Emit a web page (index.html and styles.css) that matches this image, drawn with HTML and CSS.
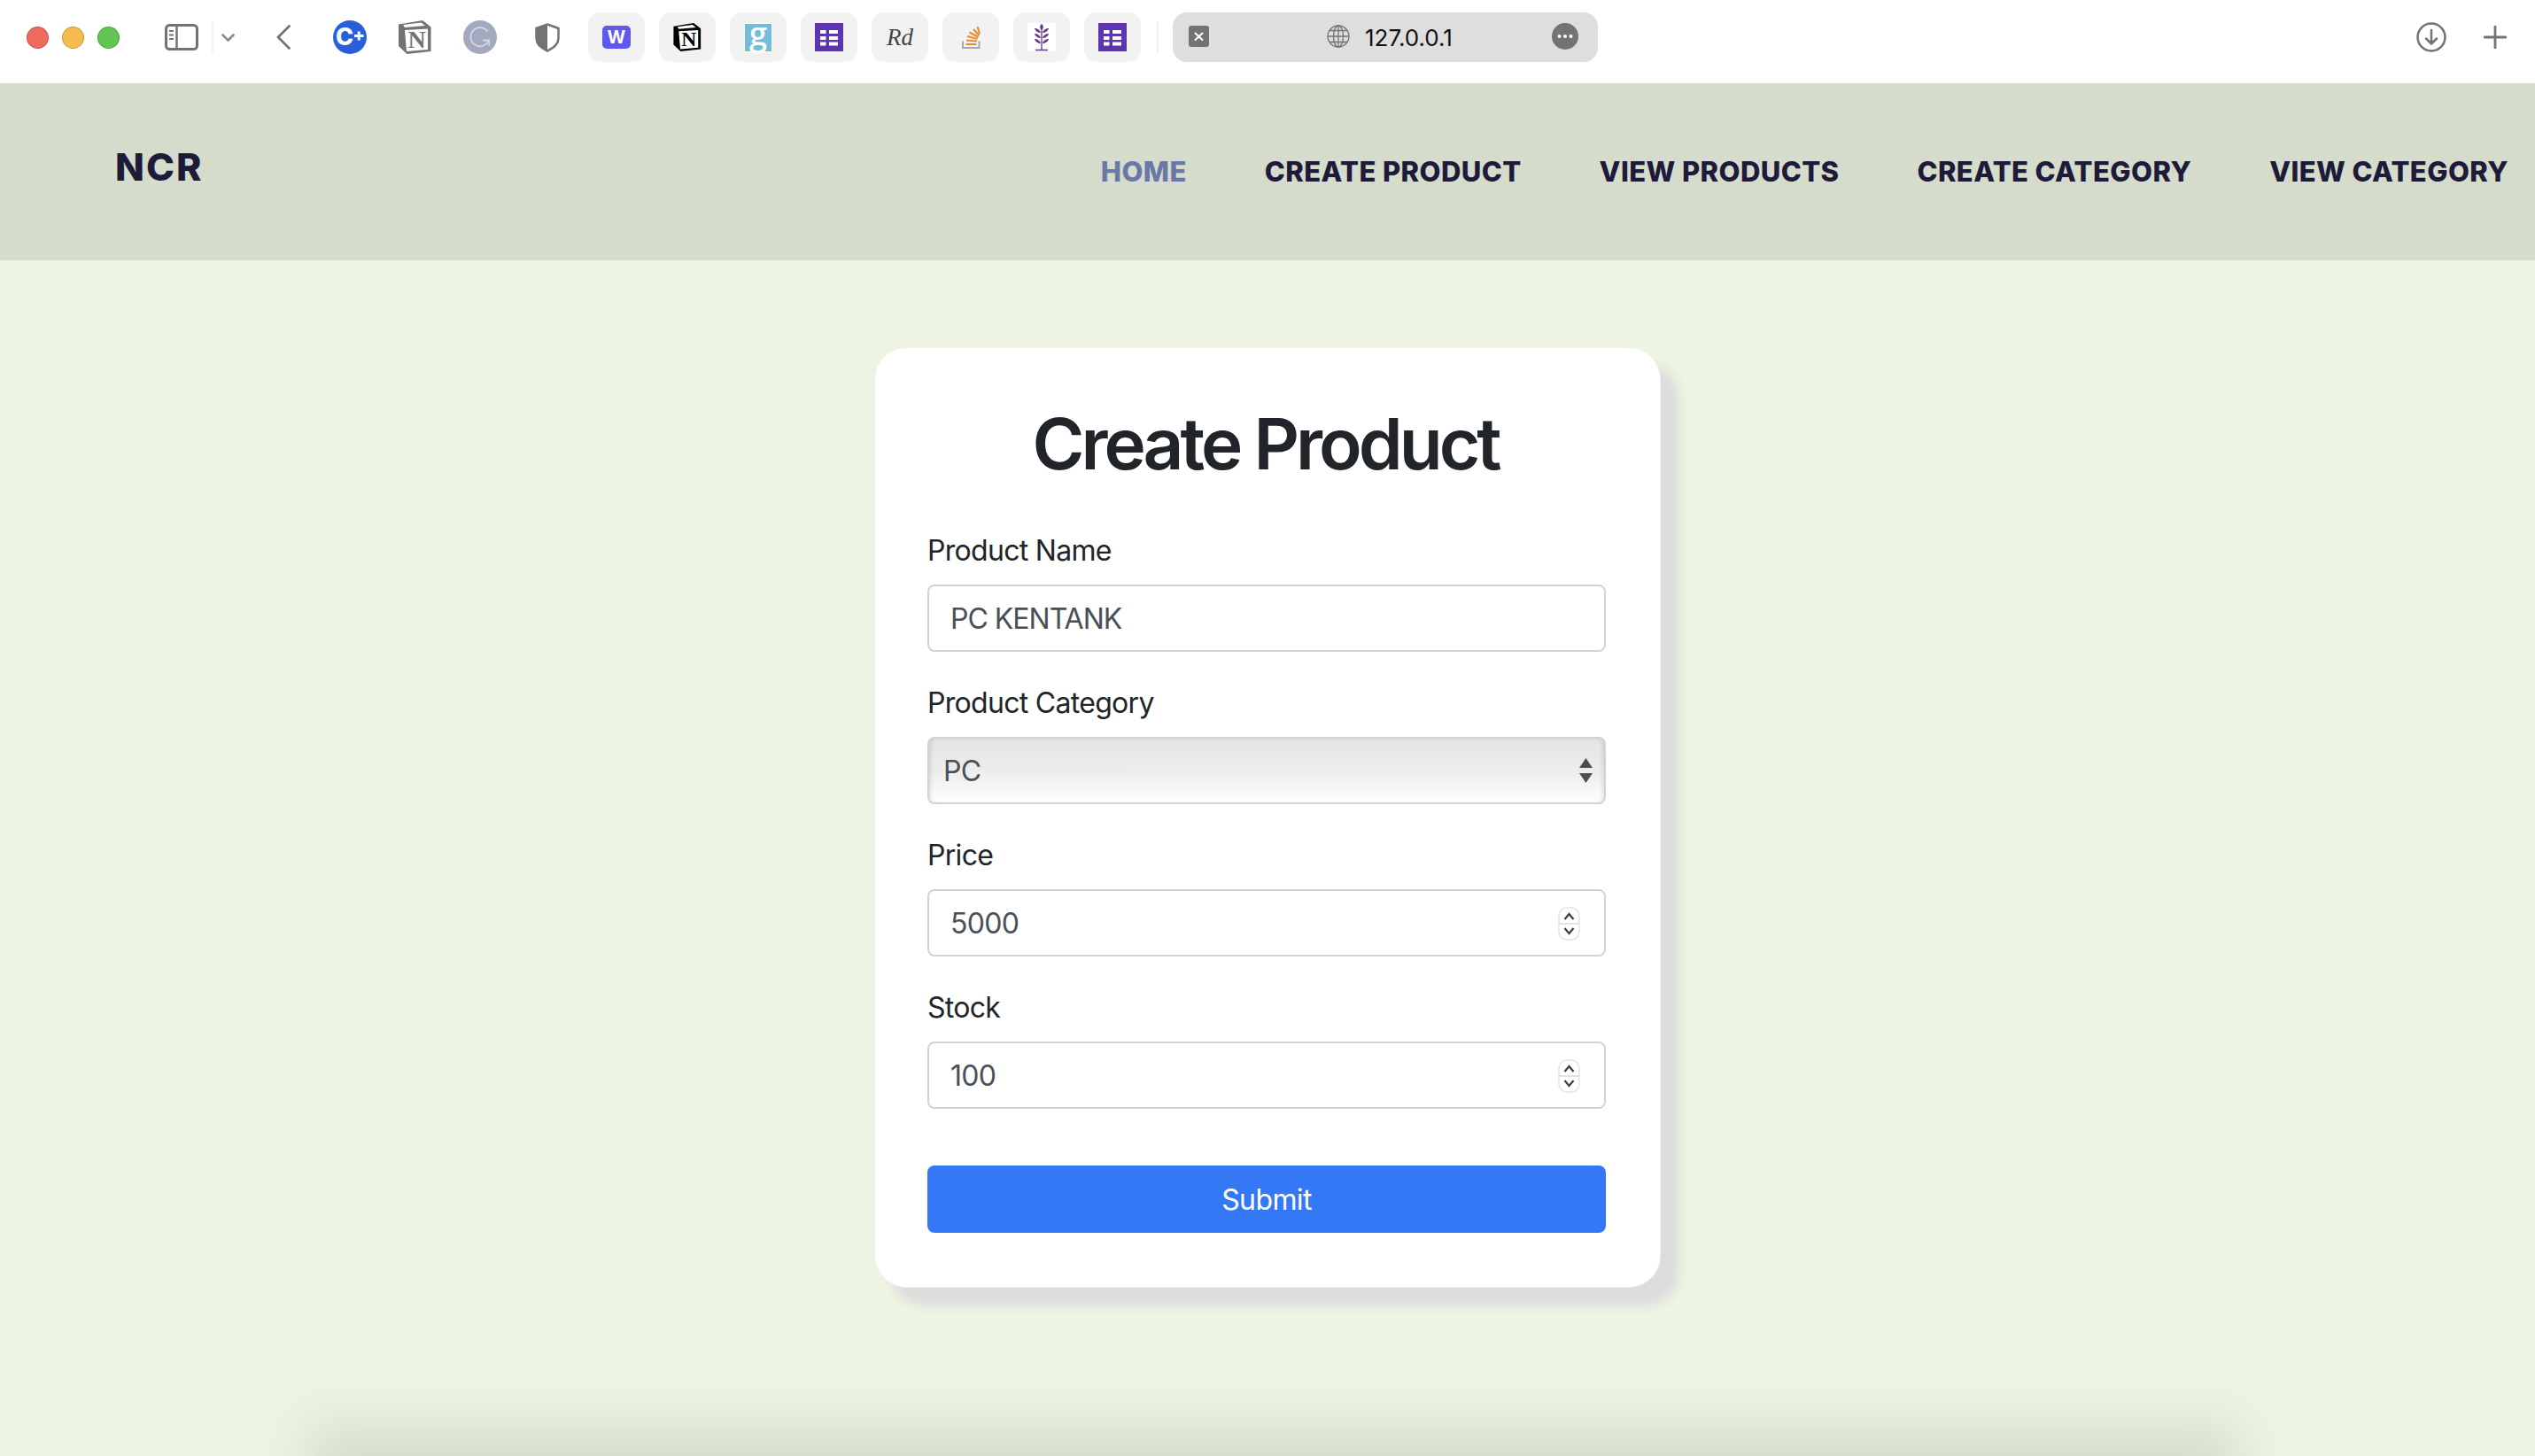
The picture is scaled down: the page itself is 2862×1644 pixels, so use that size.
FILE: index.html
```html
<html>
<head>
    <title>Create Product</title>
    <link rel="stylesheet" href="styles.css">
</head>
<body>
    <div class="toolbar">
        <div class="lights">
            <span class="light red"></span>
            <span class="light yellow"></span>
            <span class="light green"></span>
        </div>
        <svg class="sidebarIcon" width="38" height="30" viewBox="0 0 38 30">
            <rect x="1.5" y="1.5" width="35" height="27" rx="4" fill="none" stroke="#737373" stroke-width="3"/>
            <path d="M13.5 2v26" stroke="#737373" stroke-width="2.5"/>
            <path d="M5 8h5M5 12.5h5M5 17h5" stroke="#737373" stroke-width="2"/>
        </svg>
        <span class="toolDivider firstDivider"></span>
        <svg class="chevronIcon" width="15" height="9" viewBox="0 0 15 9">
            <path d="M1.5 1.5l6 6 6-6" fill="none" stroke="#8a8a8a" stroke-width="2.6" stroke-linecap="round" stroke-linejoin="round"/>
        </svg>
        <svg class="backIcon" width="16" height="28" viewBox="0 0 16 28">
            <path d="M14.5 1.5L2 14l12.5 12.5" fill="none" stroke="#737373" stroke-width="2.8" stroke-linecap="round" stroke-linejoin="round"/>
        </svg>
        <svg class="cplusIcon" width="38" height="38" viewBox="0 0 38 38">
            <circle cx="19" cy="19" r="19" fill="#2a5fdc"/>
            <text x="3" y="28" class="cplusText">C</text>
            <path d="M24 17.500h10.500M29.250 12.500v10" stroke="#fff" stroke-width="3"/>
        </svg>
        <svg class="notionGrey" width="37" height="38" viewBox="0 0 37 38">
            <path d="M0 4.5L27 0l9.5 7.5V35L9.5 38 0 29z" fill="#737373"/>
            <path d="M5 5l20.5-2.5 4.5 3.5L7 8z" fill="#fff"/>
            <path d="M7 11l26-1.500V33L9 35z" fill="#fff"/>
            <text x="20.500" y="31" class="notionText" fill="#737373">N</text>
        </svg>
        <svg class="grammarIcon" width="38" height="38" viewBox="0 0 38 38">
            <circle cx="19" cy="19" r="19" fill="#a3a9bf"/>
            <path d="M27 12a10.500 10.500 0 1 0 1.500 11" fill="none" stroke="#d5d8e2" stroke-width="1.800" stroke-linecap="round"/>
            <path d="M22 22.500h7v6" fill="none" stroke="#d5d8e2" stroke-width="1.800"/>
        </svg>
        <svg class="shieldIcon" width="28" height="33" viewBox="0 0 28 33">
            <path d="M14 1.500L26.500 6v11c0 7-6 11.500-12.500 14.500C7.500 28.500 1.500 24 1.500 17V6z" fill="#fff" stroke="#737373" stroke-width="2.500"/>
            <path d="M14 1.500V31.500C7.500 28.500 1.500 24 1.500 17V6z" fill="#737373"/>
        </svg>

        <div class="extList">
            <div class="extBtn">
                <div class="wordTile">W</div>
            </div>
            <div class="extBtn">
                <svg width="32" height="32" viewBox="0 0 37 38">
                    <path d="M0 4.500L27 0l9.500 7.500V35L9.500 38 0 29z" fill="#000"/>
                    <path d="M5 5l20.500-2.500 4.500 3.500L7 8z" fill="#fff"/>
                    <path d="M7 11l26-1.500V33L9 35z" fill="#fff"/>
                    <text x="20.500" y="31" class="notionText" fill="#000">N</text>
                </svg>
            </div>
            <div class="extBtn">
                <div class="gTile">g</div>
            </div>
            <div class="extBtn">
                <svg width="32" height="32" viewBox="0 0 32 32">
                    <rect width="32" height="32" fill="#5e35b1"/>
                    <path d="M6 10h6.500M16 10h10M6 17h6.500M16 17h10M6 23.500h6.500M16 23.500h10" stroke="#fff" stroke-width="4"/>
                </svg>
            </div>
            <div class="extBtn">
                <span class="rdMark">Rd</span>
            </div>
            <div class="extBtn">
                <svg width="21" height="25" viewBox="0 0 21 25">
                    <path d="M1 16.500v7.500h18.500v-7.500" fill="none" stroke="#a8a8a8" stroke-width="2"/>
                    <path d="M4.500 20h12M5 15.500l12 1M6 11l11.500 3M8.500 6.500l10 5.500M13 3l6.500 7M17.500 0l2.500 8" stroke="#ea8a35" stroke-width="2.200"/>
                </svg>
            </div>
            <div class="extBtn">
                <svg width="32" height="32" viewBox="0 0 32 32">
                    <rect width="32" height="32" fill="#fff"/>
                    <path d="M16 1c2.500 2 2.500 5 0 7-2.500-2-2.500-5 0-7z" fill="#6b3a87"/>
                    <path d="M15 11c-3 0-6-1.500-7-5 3 0 6 1.500 7 5zM17 11c3 0 6-1.500 7-5-3 0-6 1.500-7 5zM15 17c-3 0-6-1.500-7-5 3 0 6 1.500 7 5zM17 17c3 0 6-1.500 7-5-3 0-6 1.500-7 5zM15 23c-3 0-6-1.500-7-5 3 0 6 1.500 7 5zM17 23c3 0 6-1.500 7-5-3 0-6 1.500-7 5z" fill="#6b3a87"/>
                    <path d="M16 6v25M9 30.500h14" stroke="#6b3a87" stroke-width="1.300"/>
                </svg>
            </div>
            <div class="extBtn">
                <svg width="32" height="32" viewBox="0 0 32 32">
                    <rect width="32" height="32" fill="#5e35b1"/>
                    <path d="M6 10h6.500M16 10h10M6 17h6.500M16 17h10M6 23.500h6.500M16 23.500h10" stroke="#fff" stroke-width="4"/>
                </svg>
            </div>
        </div>

        <span class="toolDivider secondDivider"></span>

        <div class="addressBar">
            <svg class="tabFavicon" width="23" height="24" viewBox="0 0 23 24">
                <rect width="23" height="24" rx="3" fill="#737373"/>
                <path d="M7 8l9 8.500M16 8l-9 8.500" stroke="#fff" stroke-width="2"/>
            </svg>
            <svg class="globeIcon" width="26" height="26" viewBox="0 0 26 26">
                <g fill="none" stroke="#737373" stroke-width="1.300">
                    <circle cx="13" cy="13" r="12"/>
                    <ellipse cx="13" cy="13" rx="5.500" ry="12"/>
                    <path d="M13 1v24M1 13h24M3 6.500h20M3 19.500h20"/>
                </g>
            </svg>
            <span class="addressText">127.0.0.1</span>
            <svg class="moreIcon" width="30" height="30" viewBox="0 0 30 30">
                <circle cx="15" cy="15" r="15" fill="#737373"/>
                <circle cx="8.500" cy="15" r="2" fill="#fff"/>
                <circle cx="15" cy="15" r="2" fill="#fff"/>
                <circle cx="21.500" cy="15" r="2" fill="#fff"/>
            </svg>
        </div>

        <svg class="downloadIcon" width="34" height="34" viewBox="0 0 34 34">
            <circle cx="17" cy="17" r="15.500" fill="none" stroke="#737373" stroke-width="2.500"/>
            <path d="M17 9v15M11 18.500l6 6 6-6" fill="none" stroke="#737373" stroke-width="2.500" stroke-linecap="round" stroke-linejoin="round"/>
        </svg>
        <svg class="plusIcon" width="26" height="26" viewBox="0 0 26 26">
            <path d="M13 1v24M1 13h24" stroke="#737373" stroke-width="2.800" stroke-linecap="round"/>
        </svg>
    </div>

    <nav class="navBar">
        <div class="brand">NCR</div>
        <div class="navLinks">
            <a class="navLink active">HOME</a>
            <a class="navLink">CREATE PRODUCT</a>
            <a class="navLink">VIEW PRODUCTS</a>
            <a class="navLink">CREATE CATEGORY</a>
            <a class="navLink">VIEW CATEGORY</a>
        </div>
    </nav>

    <main class="content">
        <form class="productCard">
            <h1 class="cardTitle">Create Product</h1>
            <div class="field">
                <label class="fieldLabel">Product Name</label>
                <input class="fieldInput nameInput" type="text" value="PC KENTANK">
            </div>
            <div class="field">
                <label class="fieldLabel">Product Category</label>
                <div class="controlWrap">
                    <select class="fieldSelect">
                        <option>PC</option>
                    </select>
                    <svg class="selectArrows" width="15" height="28" viewBox="0 0 15 28">
                        <path d="M7.500 0L15 11H0zM7.500 28L0 17h15z" fill="#4a4f55"/>
                    </svg>
                </div>
            </div>
            <div class="field">
                <label class="fieldLabel">Price</label>
                <div class="controlWrap">
                    <input class="fieldInput" type="text" value="5000">
                    <svg class="spinner" width="25" height="38" viewBox="0 0 25 38">
                        <rect x="1" y="1" width="23" height="36" rx="9" fill="#fff" stroke="#e4e4e4" stroke-width="1.500"/>
                        <path d="M1 19h23" stroke="#d8d8d8" stroke-width="1.500"/>
                        <path d="M7.500 14l5-6 5 6M7.500 24l5 6 5-6" fill="none" stroke="#3c4043" stroke-width="2.200"/>
                    </svg>
                </div>
            </div>
            <div class="field">
                <label class="fieldLabel">Stock</label>
                <div class="controlWrap">
                    <input class="fieldInput" type="text" value="100">
                    <svg class="spinner" width="25" height="38" viewBox="0 0 25 38">
                        <rect x="1" y="1" width="23" height="36" rx="9" fill="#fff" stroke="#e4e4e4" stroke-width="1.500"/>
                        <path d="M1 19h23" stroke="#d8d8d8" stroke-width="1.500"/>
                        <path d="M7.500 14l5-6 5 6M7.500 24l5 6 5-6" fill="none" stroke="#3c4043" stroke-width="2.200"/>
                    </svg>
                </div>
            </div>
            <button class="submitBtn" type="button">Submit</button>
        </form>
    </main>

    <footer class="pageFooter"></footer>
</body>
</html>
```

FILE: styles.css
```css
html {
    height: 100%;
}
body {
    margin: 0;
    height: 1644px;
    overflow: hidden;
    background-color: #edf4e2;
    font-family: Inter, "Liberation Sans", sans-serif;
    color: #212529;
}

/* browser chrome */
.toolbar {
    display: flex;
    align-items: center;
    height: 84px;
    padding: 0 32px 10px 30px;
    background-color: #fff;
}
.lights {
    display: flex;
    gap: 15px;
}
.light {
    width: 25px;
    height: 25px;
    border-radius: 50%;
    box-sizing: border-box;
    border: 1px solid rgba(0,0,0,.2);
}
.red { background-color: #ee6a5f; }
.yellow { background-color: #f5bd4f; }
.green { background-color: #61c454; }
.toolbar svg {
    flex-shrink: 0;
}
.sidebarIcon { margin-left: 51px; }
.toolDivider {
    width: 2px;
    height: 36px;
    background-color: #f1f1f1;
}
.firstDivider { margin-left: 15px; }
.chevronIcon { margin-left: 9px; }
.backIcon { margin-left: 47px; }
.cplusIcon { margin-left: 48px; }
.cplusText {
    font-family: Inter, sans-serif;
    font-size: 27px;
    font-weight: 800;
    fill: #fff;
}
.notionGrey { margin-left: 36px; }
.notionText {
    font-family: "Liberation Serif", serif;
    font-size: 28px;
    font-weight: 700;
    text-anchor: middle;
}
.grammarIcon { margin-left: 36px; }
.shieldIcon { margin-left: 43px; }
.extList {
    display: flex;
    gap: 16px;
    margin-left: 32px;
}
.extBtn {
    display: flex;
    align-items: center;
    justify-content: center;
    width: 64px;
    height: 56px;
    border-radius: 14px;
    background-color: #f2f2f2;
}
.wordTile {
    width: 32px;
    height: 26px;
    border-radius: 5px;
    background-color: #6057ef;
    color: #fff;
    font-size: 20px;
    font-weight: 700;
    line-height: 26px;
    text-align: center;
}
.gTile {
    width: 32px;
    height: 33px;
    background-color: #74bcd9;
    border: 1px solid #fff;
    box-sizing: border-box;
    color: #fff;
    font-family: "Open Sans", sans-serif;
    font-size: 36px;
    font-weight: 600;
    line-height: 22px;
    text-align: center;
}
.rdMark {
    font-family: "Liberation Serif", serif;
    font-style: italic;
    font-size: 27px;
    color: #444;
}
.secondDivider { margin-left: 18px; }
.addressBar {
    display: flex;
    align-items: center;
    box-sizing: border-box;
    width: 480px;
    height: 56px;
    margin-left: 16px;
    padding: 0 22px 2px 18px;
    border-radius: 16px;
    background-color: #dedede;
}
.globeIcon { margin-left: 133px; }
.addressText {
    margin: 3px 0 0 17px;
    font-size: 26px;
    color: #111;
}
.moreIcon { margin-left: auto; }
.downloadIcon { margin-left: auto; }
.plusIcon { margin-left: 42px; }

/* nav */
.navBar {
    display: flex;
    align-items: center;
    justify-content: space-between;
    box-sizing: border-box;
    height: 200px;
    padding: 0 30px 0 130px;
    background-color: #d5dccb;
}
.brand {
    font-size: 43px;
    font-weight: 800;
    letter-spacing: 2px;
    color: #1e1b3a;
    padding-bottom: 12px;
}
.navLinks {
    display: flex;
    gap: 88px;
    padding-bottom: 2px;
}
.navLink {
    font-size: 31px;
    font-weight: 800;
    letter-spacing: .42px;
    color: #1e1b3a;
}
.navLink.active {
    color: #6a78a8;
}

/* form */
.content {
    display: flex;
    justify-content: center;
    box-sizing: border-box;
    height: 1350px;
    padding-top: 98px;
}
.productCard {
    box-sizing: border-box;
    width: 888px;
    height: 1062px;
    padding: 0 61px 0 59px;
    border-radius: 36px;
    background-color: #fff;
    border: 1px solid #f0f0f0;
    box-shadow: 20px 20px 12px #dcdcdc;
}
.cardTitle {
    margin: 60px 0 47px;
    padding-right: 3px;
    font-size: 80px;
    font-weight: 600;
    letter-spacing: -4px;
    line-height: 96px;
    text-align: center;
}
.field {
    margin-bottom: 32px;
}
.fieldLabel {
    display: block;
    margin-bottom: 14px;
    padding-top: 2px;
    font-size: 32px;
    letter-spacing: -.7px;
    line-height: 48px;
}
.controlWrap {
    position: relative;
}
.fieldInput,
.fieldSelect {
    display: block;
    box-sizing: border-box;
    width: 100%;
    height: 76px;
    font-family: Inter, "Liberation Sans", sans-serif;
    font-size: 32px;
    letter-spacing: -.7px;
    color: #495057;
    border: 2px solid #ced4da;
    border-radius: 8px;
    outline: none;
}
.fieldInput {
    padding: 0 24px;
    background-color: #fff;
}
.nameInput {
    letter-spacing: -1px;
}
.fieldSelect {
    padding: 0 16px;
    appearance: none;
    background: linear-gradient(#e4e4e4, #ececec 50%, #fff);
    box-shadow: inset 4px 0 4px -2px rgba(0,0,0,.1), inset -4px 0 4px -2px rgba(0,0,0,.1);
}
.selectArrows {
    position: absolute;
    top: 24px;
    right: 15px;
}
.spinner {
    position: absolute;
    top: 20px;
    right: 29px;
}
.submitBtn {
    display: block;
    width: 100%;
    height: 76px;
    margin-top: 64px;
    border: none;
    border-radius: 8px;
    background-color: #3578f6;
    color: #fff;
    font-family: Inter, "Liberation Sans", sans-serif;
    font-size: 32px;
    letter-spacing: -.6px;
}

/* sits just below the fold, only its shadow shows */
.pageFooter {
    width: 2180px;
    height: 100px;
    margin-left: 347px;
    box-shadow: 0 -35px 60px #d5dccb;
}
```
